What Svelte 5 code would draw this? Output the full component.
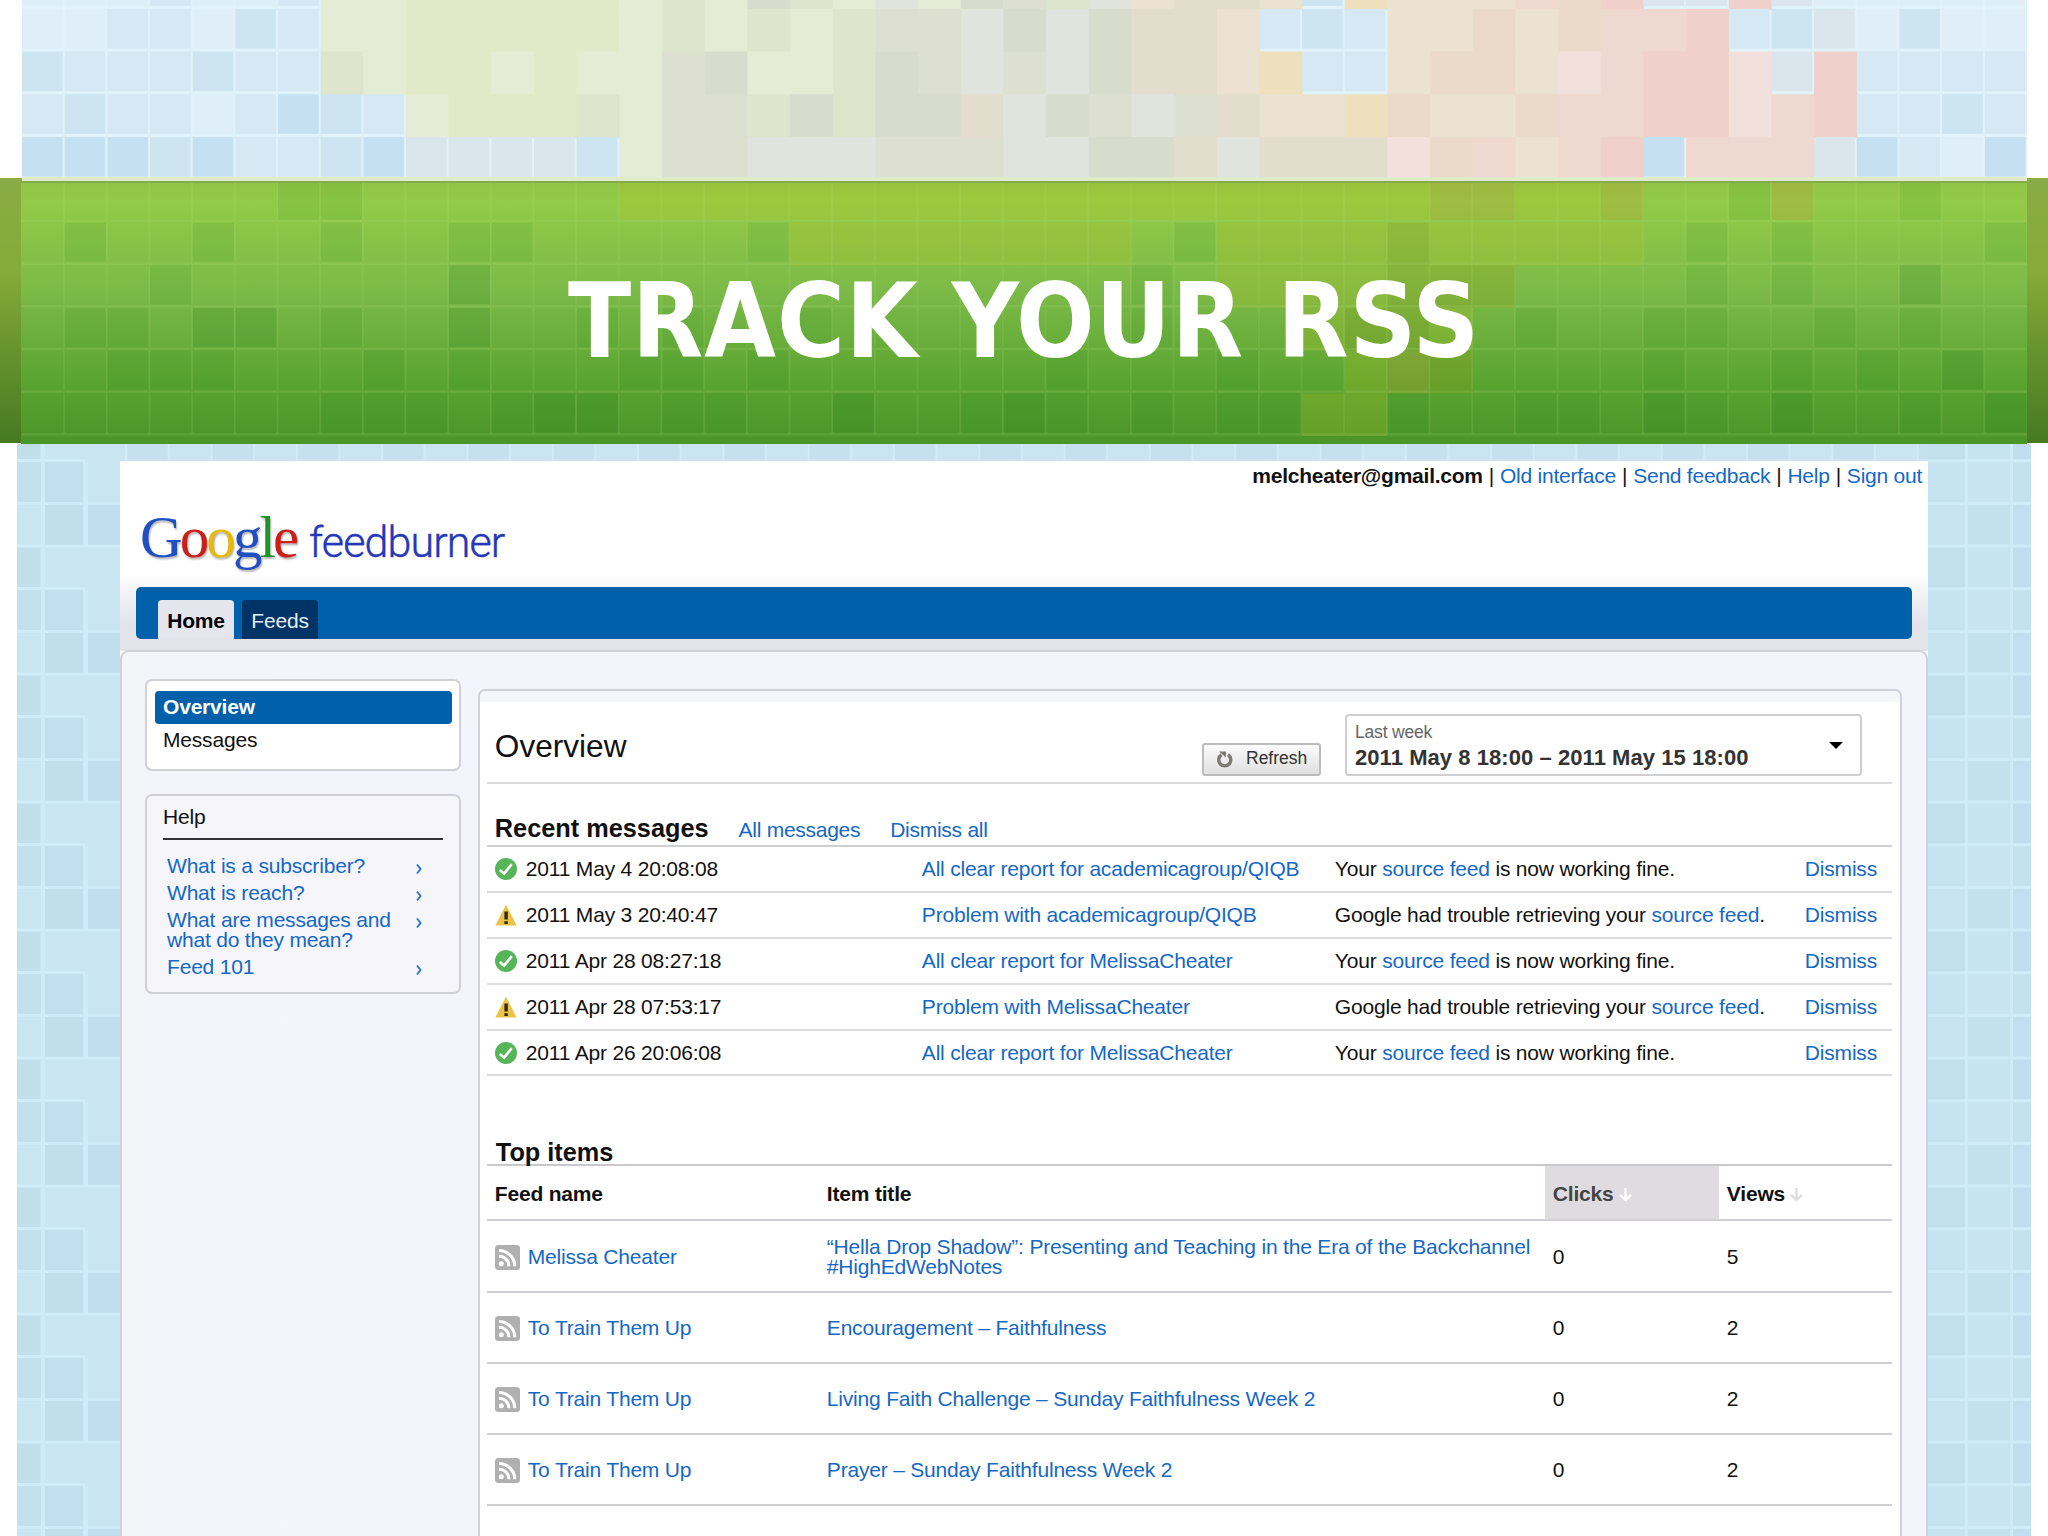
<script>
    const cell = 42.67;

    const palette = {
        a: '#dfeef8', b: '#d5e8f4', c: '#cde5f0', d: '#c5e1f1', v: '#dae5ec',
        e: '#e5ecd5', f: '#e1eac8', g: '#dde5cd', h: '#dddfd1', i: '#d8dccc',
        j: '#e1e4dc', k: '#e3ddcd', l: '#ebe2d1', m: '#ebdac9', n: '#efd8cf',
        o: '#f0d0ca', p: '#f1e0db', q: '#eee0bc'
    };
    const blues = 'abcdv';

    // one character per tile, 47 tiles in a row
    const skyRows = [
        'aaabaabeefffffegeigejeihgjlkklcqlllnmovvovaaaaa',
        'aabbacbeefffffegegeghhjijikklbcbllmlmnnobcvacaa',
        'cbbbcbbgeffefeehieegihjhjikklqbblmmlpnoopvobbbb',
        'bcbbabdcbefffgehhgigiikjihjhkllqmllmnnoopnobbcb',
        'dddcdbbcdvvvvcehhjjjhhhjjiikjkkkpmnlnodnnnvdbad'
    ];

    const bandRows = [
        '......dd......yyyyyyyyyyyyyyyyyyyooyyo..do..d..',
        '.d..d..d..dd.....dyyyyyyyy.dyyyyYyyyyy.d.d....d',
        '...d......D...............d.yyyyYYY....d.d..D..',
        '.dd.DD.d..D..d.d..d.......d...yYYy.d..dd..d.d..',
        '..ddd...d.d...dd.d......d...d..yoY....d..d.d.D.',
        '.......ddd.dDD.dd..D..dDd.d.ddyyd..dd.Dd.D..d.D'
    ];
    const shades = {
        d: 'rgba(40, 140, 40, 0.1)',
        D: 'rgba(30, 120, 30, 0.16)',
        y: 'rgba(190, 190, 35, 0.22)',
        Y: 'rgba(150, 150, 20, 0.24)',
        o: 'rgba(190, 155, 50, 0.28)'
    };

    const accountLinks = ['Old interface', 'Send feedback', 'Help', 'Sign out'];

    const helpLinks = [
        'What is a subscriber?',
        'What is reach?',
        'What are messages and what do they mean?',
        'Feed 101'
    ];

    const messages = [
        { ok: true, date: '2011 May 4 20:08:08', title: 'All clear report for academicagroup/QIQB' },
        { ok: false, date: '2011 May 3 20:40:47', title: 'Problem with academicagroup/QIQB' },
        { ok: true, date: '2011 Apr 28 08:27:18', title: 'All clear report for MelissaCheater' },
        { ok: false, date: '2011 Apr 28 07:53:17', title: 'Problem with MelissaCheater' },
        { ok: true, date: '2011 Apr 26 20:06:08', title: 'All clear report for MelissaCheater' }
    ];

    const items = [
        { feed: 'Melissa Cheater', title: '“Hella Drop Shadow”: Presenting and Teaching in the Era of the Backchannel #HighEdWebNotes', clicks: 0, views: 5 },
        { feed: 'To Train Them Up', title: 'Encouragement – Faithfulness', clicks: 0, views: 2 },
        { feed: 'To Train Them Up', title: 'Living Faith Challenge – Sunday Faithfulness Week 2', clicks: 0, views: 2 },
        { feed: 'To Train Them Up', title: 'Prayer – Sunday Faithfulness Week 2', clicks: 0, views: 2 }
    ];
</script>

<div class="slide">
    <header class="banner">
        <svg class="mosaic" width="2048" height="444" viewBox="0 0 2048 444">
            <defs>
                <linearGradient id="band" x1="0" y1="0" x2="0" y2="1">
                    <stop offset="0" stop-color="#90c445" />
                    <stop offset="0.08" stop-color="#92cb47" />
                    <stop offset="0.42" stop-color="#7cba48" />
                    <stop offset="0.78" stop-color="#59a32f" />
                    <stop offset="1" stop-color="#4b9529" />
                </linearGradient>
                <linearGradient id="edge" x1="0" y1="0" x2="0" y2="1">
                    <stop offset="0" stop-color="#8aab45" />
                    <stop offset="0.35" stop-color="#86ab38" />
                    <stop offset="0.7" stop-color="#628f2c" />
                    <stop offset="1" stop-color="#467a22" />
                </linearGradient>
            </defs>
            <rect x="22" width="2005" height="181" fill="#e1f3fa" />
            {#each skyRows as row, r}
                {#each row.split('') as tile, c}
                    <rect
                        x={22 + c * cell}
                        y={r * cell - 33.8}
                        width={blues.includes(tile) ? cell - 2 : cell + 0.5}
                        height={blues.includes(tile) ? cell - 3 : cell + 1}
                        fill={palette[tile]}
                    />
                {/each}
            {/each}
            <rect y="178" width="2048" height="265" fill="url(#edge)" />
            <rect x="22" y="177" width="2005" height="4" fill="#dfebcb" />
            <rect x="21" y="181" width="2006" height="263" fill="url(#band)" />
            {#each bandRows as row, r}
                {#each row.split('') as tile, c}
                    {#if shades[tile]}
                        <rect
                            x={22 + c * cell}
                            y={r === 0 ? 181 : 178 + r * cell + 2}
                            width={'yYo'.includes(tile) ? cell : cell - 1.5}
                            height={r === 0 ? 39 : 'yYo'.includes(tile) ? cell : cell - 4}
                            fill={shades[tile]}
                        />
                    {/if}
                {/each}
            {/each}
            <g fill="#b9e68c" opacity="0.14">
                {#each [1, 2, 3, 4, 5, 6] as r}
                    <rect x="22" y={177 + r * cell} width="2005" height="2.5" />
                {/each}
                {#each Array(46) as _, c}
                    <rect x={20.5 + (c + 1) * cell} y="181" width="1.8" height="254" />
                {/each}
            </g>
            <rect x="0" y="181" width="2048" height="2" fill="#86ab4c" />
        </svg>
        <h1>TRACK YOUR RSS</h1>
    </header>

    <div class="stage">
        <svg class="tiles" width="2014" height="1092">
            <defs>
                <pattern id="left-tiles" width="103" height="128" patternUnits="userSpaceOnUse" y="18">
                    <rect width="103" height="128" fill="#c9e5f2" />
                    <rect width="24" height="40" fill="#c2e0ee" />
                    <rect x="28" width="38" height="40" fill="#c1dfee" />
                    <rect x="28" y="43" width="38" height="40" fill="#c0dfed" />
                    <rect x="71" y="43" width="32" height="40" fill="#c0deed" />
                    <rect y="85" width="23" height="40" fill="#c0dfeb" />
                    <g fill="#cdebf8">
                        <rect x="24" width="4" height="128" />
                        <rect x="66" width="5" height="83" />
                        <rect y="40" width="103" height="3" />
                        <rect y="82.6" width="103" height="3" />
                        <rect y="125" width="68" height="3" />
                    </g>
                </pattern>
                <pattern id="right-tiles" width="128" height="128" patternUnits="userSpaceOnUse" x="1911" y="58">
                    <rect width="128" height="128" fill="#c6e3f1" />
                    <rect width="38" height="42" fill="#c8e4f1" />
                    <rect x="40" width="42" height="42" fill="#c3e1ed" />
                    <rect x="85" width="20" height="42" fill="#c2dff1" />
                    <rect y="43" width="38" height="42" fill="#c2e0eb" />
                    <rect x="85" y="43" width="20" height="42" fill="#c1def1" />
                    <rect x="40" y="86" width="42" height="42" fill="#c8e4f2" />
                    <rect x="85" y="86" width="20" height="42" fill="#c4e2ee" />
                    <g fill="#cfebf7">
                        <rect x="37" width="3" height="128" />
                        <rect x="82" width="3" height="128" />
                        <rect y="0" width="128" height="3" />
                        <rect y="42.6" width="128" height="3" />
                        <rect y="85.3" width="128" height="3" />
                    </g>
                </pattern>
                <pattern id="top-tiles" width="85.3" height="18" patternUnits="userSpaceOnUse" x="23">
                    <rect width="86" height="18" fill="#cae5f2" />
                    <rect x="2" width="40" height="15" fill="#c5e1ef" />
                    <rect width="2" height="18" fill="#d1ebf7" />
                    <rect x="42.6" width="2" height="18" fill="#d1ebf7" />
                </pattern>
            </defs>
            <rect width="103" height="1092" fill="url(#left-tiles)" />
            <rect x="103" width="1808" height="18" fill="url(#top-tiles)" />
            <rect x="1911" width="103" height="1092" fill="url(#right-tiles)" />
        </svg>

        <div class="screen">
            <div class="account">
                <b>melcheater@gmail.com</b>
                {#each accountLinks as link}
                    <span>|</span><a href="#top">{link}</a>
                {/each}
            </div>

            <div class="logo">
                <div class="google">
                    <span class="blue">G</span><span class="red">o</span><span class="yellow">o</span><span class="blue">g</span><span class="green">l</span><span class="red">e</span>
                </div>
                <div class="feedburner">feedburner</div>
            </div>

            <div class="nav_area">
                <nav class="nav_bar">
                    <a class="tab active" href="#home">Home</a>
                    <a class="tab" href="#feeds">Feeds</a>
                </nav>
            </div>

            <div class="body">
                <aside>
                    <div class="box menu">
                        <a class="menu_item selected" href="#overview">Overview</a>
                        <a class="menu_item" href="#messages">Messages</a>
                    </div>
                    <div class="box help">
                        <h4>Help</h4>
                        <ul>
                            {#each helpLinks as link}
                                <li>
                                    <a href="#help">{link}</a>
                                    <svg width="8" height="12" viewBox="0 0 8 12"><path d="M2 1.5 L5.5 6 L2 10.5" fill="none" stroke="#2a76cf" stroke-width="1.9" /></svg>
                                </li>
                            {/each}
                        </ul>
                    </div>
                </aside>

                <main>
                    <div class="title_row">
                        <h2>Overview</h2>
                        <button class="refresh">
                            <svg width="18" height="20" viewBox="0 0 18 20">
                                <path d="M12 5.8 A6 6 0 1 1 5.5 5.8" fill="none" stroke="#7b7b74" stroke-width="3.4" />
                                <path d="M3 2.5 H10 V8.5 Z" fill="#7b7b74" />
                            </svg>
                            Refresh
                        </button>
                        <div class="range">
                            <div>
                                <p class="range_label">Last week</p>
                                <p class="range_value">2011 May 8 18:00 – 2011 May 15 18:00</p>
                            </div>
                            <span class="caret"></span>
                        </div>
                    </div>

                    <div class="section_head">
                        <h3>Recent messages</h3>
                        <a href="#all">All messages</a>
                        <a href="#dismiss">Dismiss all</a>
                    </div>
                    <div class="messages">
                        {#each messages as message}
                            <div class="message">
                                {#if message.ok}
                                    <svg width="22" height="22" viewBox="0 0 22 22">
                                        <circle cx="11" cy="11" r="11" fill="#56b558" />
                                        <path d="M4.8 12 L9 15.6 L16.8 6.2" fill="none" stroke="#fff" stroke-width="2.6" />
                                    </svg>
                                {:else}
                                    <svg width="22" height="22" viewBox="0 0 22 22">
                                        <path d="M11 0.5 L21.6 21.5 H0.4 Z" fill="#ecc344" />
                                        <path d="M9.4 7.5 H12.8 V15.5 H9.4 Z M9.4 17.3 H12.8 V20 H9.4 Z" fill="#2b2a22" />
                                    </svg>
                                {/if}
                                <span class="date">{message.date}</span>
                                <a class="subject" href="#message">{message.title}</a>
                                {#if message.ok}
                                    <span class="detail">Your <a href="#source">source feed</a> is now working fine.</span>
                                {:else}
                                    <span class="detail">Google had trouble retrieving your <a href="#source">source feed</a>.</span>
                                {/if}
                                <a class="dismiss" href="#dismiss">Dismiss</a>
                            </div>
                        {/each}
                    </div>

                    <h3 class="top_items">Top items</h3>
                    <div class="items">
                        <div class="item item_head">
                            <b>Feed name</b>
                            <b>Item title</b>
                            <div class="sorted">
                                <b>Clicks</b>
                                <svg width="13" height="14" viewBox="0 0 13 14"><path d="M6.5 0 V12 M1 6.8 L6.5 12 L12 6.8" fill="none" stroke="#fff" stroke-width="2.4" /></svg>
                            </div>
                            <div class="unsorted">
                                <b>Views</b>
                                <svg width="13" height="14" viewBox="0 0 13 14"><path d="M6.5 0 V12 M1 6.8 L6.5 12 L12 6.8" fill="none" stroke="#dedde0" stroke-width="2.4" /></svg>
                            </div>
                        </div>
                        {#each items as item}
                            <div class="item">
                                <div class="feed">
                                    <svg width="25" height="25" viewBox="0 0 25 25">
                                        <rect width="25" height="25" rx="3.5" fill="#b0b0b0" />
                                        <circle cx="6.3" cy="18.8" r="2.5" fill="#fff" />
                                        <path d="M4 11.2 A10 10 0 0 1 14 21.2 M4 5.4 A16 16 0 0 1 19.8 21.2" fill="none" stroke="#fff" stroke-width="3" />
                                    </svg>
                                    <a href="#feed">{item.feed}</a>
                                </div>
                                <a class="item_title" href="#item">{item.title}</a>
                                <span class="count">{item.clicks}</span>
                                <span class="count">{item.views}</span>
                            </div>
                        {/each}
                    </div>
                </main>
            </div>
        </div>
    </div>
</div>

<style>
    :global(body) {
        margin: 0;
        background: #fff;
    }

    .slide, .slide * {
        box-sizing: border-box;
    }

    .slide {
        width: 2048px;
        height: 1536px;
        overflow: hidden;
        background: #fff;
        color: #111;
        font-family: "Liberation Sans", Arial, sans-serif;
        font-size: 21px;
        letter-spacing: -0.19px;
        line-height: 20.3px;
    }

    h1, h2, h3, h4, p, ul {
        margin: 0;
        padding: 0;
    }

    a {
        color: #1468c7;
        text-decoration: none;
    }

    svg {
        display: block;
        flex: none;
    }

    .banner {
        position: relative;
        height: 444px;
        padding-top: 181px;
        display: flex;
        justify-content: center;
    }

    .mosaic, .tiles {
        position: absolute;
        top: 0;
        left: 0;
    }

    h1 {
        position: relative;
        padding-top: 70px;
        color: #fff;
        font-family: "DejaVu Sans Condensed", "DejaVu Sans", sans-serif;
        font-size: 103px;
        font-stretch: condensed;
        font-weight: 700;
        line-height: 140px;
        letter-spacing: 0.9px;
        white-space: nowrap;
    }

    .stage {
        position: relative;
        height: 1092px;
        margin: 0 17px;
        padding: 17px 103px 0;
    }

    .screen {
        position: relative;
        height: 1075px;
        background: #fff;
        display: flex;
        flex-direction: column;
    }

    .account {
        flex: none;
        height: 52px;
        padding: 5px 6px 0 0;
        display: flex;
        justify-content: flex-end;
        gap: 6px;
        letter-spacing: -0.24px;
    }

    .logo {
        flex: none;
        height: 60px;
        padding-left: 20px;
        display: flex;
        align-items: baseline;
        line-height: 48px;
    }

    .google {
        width: 169px;
        font-family: "Liberation Serif", serif;
        font-size: 59px;
        letter-spacing: -2.9px;
        text-shadow: 1px 2px 2px rgba(0, 0, 0, 0.3);
        white-space: nowrap;
    }

    .blue { color: #1f4fc0; }
    .red { color: #cc1f1a; }
    .yellow { color: #e8b80c; }
    .green { color: #1c9428; }

    .feedburner {
        color: #2438b8;
        font-family: Roboto, "Open Sans", sans-serif;
        font-size: 43px;
        font-weight: 300;
        letter-spacing: -0.9px;
        -webkit-text-stroke: 0.4px #2438b8;
    }

    .nav_area {
        flex: none;
        height: 78px;
        padding: 14px 16px 0;
        background: linear-gradient(#fff 0, #f3f3f6 20px, #e3e4ea 50px, #e3e4ea 100%);
    }

    .nav_bar {
        height: 52px;
        padding: 13px 22px 0;
        display: flex;
        gap: 8px;
        background: #0060aa;
        border-radius: 5px;
    }

    .tab {
        width: 76px;
        display: flex;
        align-items: center;
        justify-content: center;
        padding-top: 3px;
        border-radius: 4px 4px 0 0;
        background: #003467;
        color: #e8eef6;
    }

    .tab.active {
        background: #e5e6ed;
        color: #000;
        font-weight: 700;
    }

    .body {
        flex: 1;
        margin-top: -1px;
        padding: 27px 24px 0 23px;
        display: flex;
        gap: 17px;
        background: linear-gradient(90deg, #f4f5f9 0, #f4f4fd 200px);
        border: 2px solid #d0d0d6;
        border-bottom: none;
        border-radius: 9px 9px 0 0;
    }

    aside {
        width: 316px;
        display: flex;
        flex-direction: column;
        gap: 23px;
    }

    .box {
        border: 2px solid #d0d0d6;
        border-radius: 7px;
    }

    .menu {
        height: 92px;
        padding: 10px 7px 0 8px;
        background: #fff;
    }

    .menu_item {
        height: 33px;
        padding-left: 8px;
        display: flex;
        align-items: center;
        color: #111;
    }

    .menu_item.selected {
        background: #0060aa;
        border-radius: 4px;
        color: #fff;
        font-weight: 700;
    }

    .help {
        height: 200px;
        padding: 11px 15px 0 16px;
        background: #f5f5fa;
    }

    h4 {
        padding-bottom: 11px;
        border-bottom: 2px solid #333;
        width: 280px;
        font-size: 21px;
        font-weight: 400;
    }

    ul {
        padding: 16px 0 0 4px;
        list-style: none;
    }

    li {
        display: flex;
        align-items: flex-start;
        margin-bottom: 6.6px;
    }

    li a {
        width: 248px;
    }

    li svg {
        margin-top: 7px;
    }

    main {
        width: 1425px;
        height: 900px;
        margin-top: 10px;
        padding: 0 8px 0 7px;
        background: linear-gradient(#f5f6fa 11px, #fff 11px);
        border: 2px solid #d0d0d6;
        border-radius: 7px 7px 0 0;
    }

    .title_row {
        height: 93px;
        padding: 24px 30px 6px 8px;
        display: flex;
        align-items: flex-end;
        border-bottom: 2px solid #dcdcdf;
    }

    h2 {
        flex: 1;
        padding-bottom: 15px;
        font-size: 31.6px;
        font-weight: 400;
        line-height: 30px;
        letter-spacing: 0;
    }

    .refresh {
        width: 119px;
        height: 33px;
        margin: 0 24px 0 0;
        padding: 0 12px 2px;
        display: flex;
        align-items: center;
        gap: 12px;
        background: linear-gradient(#fbfbfb, #e0e0e0);
        border: 2px solid #bcbcbc;
        border-radius: 3px;
        color: #333;
        font: 17.5px "Liberation Sans", Arial, sans-serif;
    }

    .range {
        width: 517px;
        height: 62px;
        padding: 0 17px 0 8px;
        display: flex;
        align-items: center;
        justify-content: space-between;
        border: 2px solid #cfcfd2;
        border-radius: 4px;
    }

    .range_label {
        margin-bottom: 6px;
        color: #666;
        font-size: 17.5px;
    }

    .range_value {
        color: #333;
        font-size: 22px;
        font-weight: 700;
        letter-spacing: 0.06px;
    }

    .caret {
        border: 7px solid transparent;
        border-top-color: #000;
        border-bottom: none;
    }

    .section_head {
        height: 63px;
        padding: 0 8px 5px;
        display: flex;
        align-items: flex-end;
        gap: 30px;
        border-bottom: 2px solid #cfcfd2;
    }

    .section_head a {
        letter-spacing: -0.27px;
    }

    h3 {
        font-size: 25.3px;
        font-weight: 700;
        line-height: 24px;
        letter-spacing: 0;
        white-space: nowrap;
    }

    .message {
        height: 45.9px;
        padding: 1px 8px 0;
        display: flex;
        align-items: center;
        border-bottom: 2px solid #dcdcdf;
        white-space: nowrap;
    }

    .date {
        width: 405px;
        padding-left: 9px;
    }

    .subject {
        width: 413px;
    }

    .detail {
        width: 470px;
    }

    .top_items {
        height: 90px;
        padding: 64px 0 0 9px;
        border-bottom: 2px solid #c8c8cd;
    }

    .item {
        height: 71.2px;
        padding-top: 2px;
        display: grid;
        grid-template-columns: 332px 726px 174px 1fr;
        align-items: center;
        border-bottom: 2px solid #cfcfd4;
    }

    .item > * {
        padding-left: 8px;
    }

    .item_head {
        height: 55px;
        padding-top: 0;
    }

    .item_head b {
        padding-top: 2px;
    }

    .sorted, .unsorted {
        height: 100%;
        display: flex;
        align-items: center;
        gap: 5px;
    }

    .sorted svg, .unsorted svg {
        margin-top: 4px;
    }

    .sorted {
        background: #dedce0;
        color: #444;
    }

    .feed {
        display: flex;
        align-items: center;
        gap: 8px;
    }

    .item_title {
        padding-right: 10px;
    }
</style>
